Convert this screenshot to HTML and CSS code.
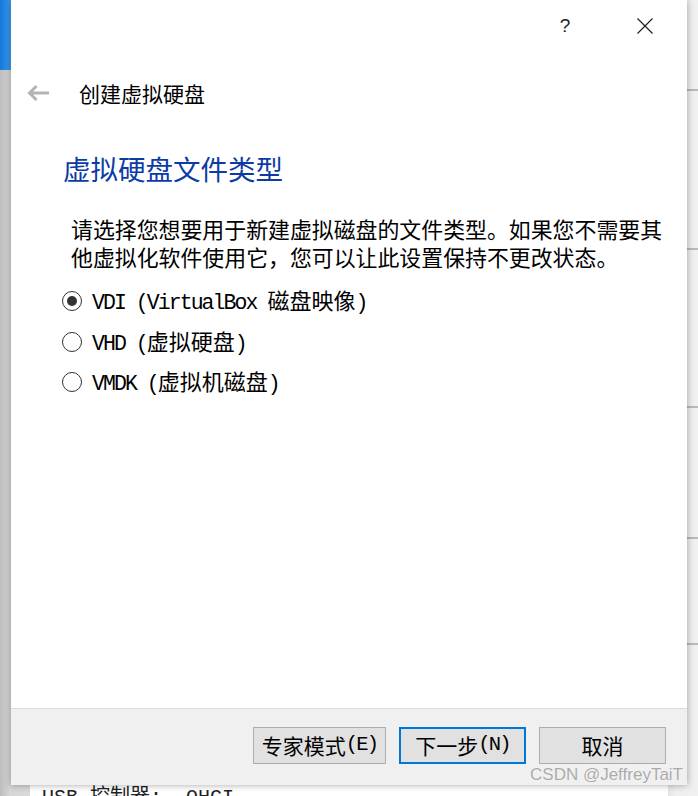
FILE: index.html
```html
<!DOCTYPE html>
<html lang="zh-CN">
<head>
<meta charset="utf-8">
<title>创建虚拟硬盘</title>
<link rel="stylesheet" href="styles.css">
</head>
<body>
<div class="desktop">
  <div class="bg">
    <div class="bg-left"><div class="bg-left-top"></div></div>
    <div class="bg-main"><div class="usb">USB 控制器:&nbsp;&nbsp;OHCI</div></div>
    <div class="bg-right">
      <div class="bg-row r1"></div>
      <div class="bg-row r2"></div>
      <div class="bg-row r3"></div>
      <div class="bg-row r4"></div>
      <div class="bg-row r5"></div>
    </div>
  </div>

  <div class="dialog">
    <div class="titlebar">
      <span class="tb-btn help">?</span>
      <span class="tb-btn close">
        <svg width="16" height="16" viewBox="0 0 16 16"><path d="M0.5 0.5 L15.5 15.5 M15.5 0.5 L0.5 15.5" stroke="#1a1a1a" stroke-width="1.1" fill="none"/></svg>
      </span>
    </div>

    <div class="header">
      <svg class="back" width="24" height="18" viewBox="0 0 24 18"><path d="M23 9 H3.5 M10.5 2 L3.5 9 L10.5 16" stroke="#b3b3b3" stroke-width="3" fill="none"/></svg>
      <span class="title">创建虚拟硬盘</span>
    </div>

    <div class="content">
      <h1 class="heading">虚拟硬盘文件类型</h1>
      <p class="desc">请选择您想要用于新建虚拟磁盘的文件类型。如果您不需要其<br>他虚拟化软件使用它，您可以让此设置保持不更改状态。</p>
      <div class="options">
        <div class="opt"><span class="radio checked"></span><span class="lbl"><span class="lat">VDI (VirtualBox </span>磁盘映像<span class="lat">)</span></span></div>
        <div class="opt"><span class="radio"></span><span class="lbl"><span class="lat">VHD (</span>虚拟硬盘<span class="lat">)</span></span></div>
        <div class="opt"><span class="radio"></span><span class="lbl"><span class="lat">VMDK (</span>虚拟机磁盘<span class="lat">)</span></span></div>
      </div>
    </div>

    <div class="footer">
      <button class="btn wide">专家模式<span class="lat">(E)</span></button>
      <button class="btn default">下一步<span class="lat">(N)</span></button>
      <button class="btn">取消</button>
    </div>

    <div class="watermark">CSDN @JeffreyTaiT</div>
  </div>
</div>
</body>
</html>
```

FILE: styles.css
```css
* { box-sizing: border-box; }
html, body { margin: 0; padding: 0; }
body {
  width: 698px;
  height: 796px;
  overflow: hidden;
  font-family: "Noto Sans CJK SC", "Noto Sans", sans-serif;
  background: #ffffff;
}

.desktop {
  position: relative;
  width: 698px;
  height: 796px;
}

/* background application */
.bg {
  display: grid;
  grid-template-columns: 30px 1fr 30px;
  height: 796px;
}
.bg-left {
  background: linear-gradient(to right, #bdbdbd, #d6d6d6 10px, #d9d9d9);
}
.bg-left-top {
  height: 70px;
  background: linear-gradient(to right, #1378d8, #3a9cf2 11px, #3a9cf2);
}
.bg-main {
  background: #ffffff;
  display: flex;
  flex-direction: column;
  justify-content: flex-end;
}
.usb {
  padding-left: 12px;
  margin-bottom: -17px;
  font-family: "Liberation Mono", "Noto Sans CJK SC", monospace;
  font-size: 20px;
  line-height: 30px;
  color: #222;
  white-space: nowrap;
}
.bg-right {
  background: linear-gradient(to right, #e4e4e4, #efefef 8px, #f0f0f0);
}
.bg-row { border-bottom: 2px solid #b9b9b9; }
.r1 { height: 91px; }
.r2 { height: 159px; }
.r3 { height: 158px; }
.r4 { height: 131px; }
.r5 { height: 106px; }

/* dialog window */
.dialog {
  position: absolute;
  left: 11px;
  top: 0;
  width: 676px;
  height: 785px;
  background: #ffffff;
  display: flex;
  flex-direction: column;
  box-shadow: 0 0 7px rgba(0, 0, 0, 0.35);
}

.titlebar {
  height: 52px;
  display: flex;
  justify-content: flex-end;
  align-items: center;
  gap: 34px;
  padding-right: 19px;
  flex: none;
}
.tb-btn {
  width: 46px;
  height: 40px;
  display: flex;
  align-items: center;
  justify-content: center;
  color: #222;
}
.help {
  font-family: "Liberation Sans", sans-serif;
  font-size: 19px;
}

.header {
  margin-top: 20px;
  height: 42px;
  display: flex;
  align-items: center;
  padding-left: 15px;
  gap: 29px;
  flex: none;
}
.back { display: block; }
.title {
  font-size: 21px;
  color: #000;
  line-height: 42px;
}

.content {
  flex: 1;
  padding-left: 51px;
}
.heading {
  margin: 36px 0 0 1px;
  font-size: 27.5px;
  font-weight: 400;
  line-height: 36px;
  color: #0c3ba6;
}
.desc {
  margin: 29px 0 0 9px;
  font-size: 21.9px;
  line-height: 28px;
  color: #000;
  white-space: nowrap;
}
.options {
  margin-top: 10px;
}
.opt {
  height: 40.5px;
  display: flex;
  align-items: center;
  gap: 10px;
}
.radio {
  width: 20px;
  height: 20px;
  border: 1.5px solid #333;
  border-radius: 50%;
  display: flex;
  align-items: center;
  justify-content: center;
  flex: none;
}
.radio.checked::after {
  content: "";
  width: 10px;
  height: 10px;
  border-radius: 50%;
  background: #333;
}
.lbl {
  font-size: 22px;
  line-height: 30px;
  color: #000;
  white-space: pre;
}
.lat {
  font-family: "Liberation Mono", monospace;
  font-size: 21.5px;
  letter-spacing: -1.94px;
}

.footer {
  height: 77px;
  flex: none;
  background: #f0f0f0;
  border-top: 1px solid #dcdcdc;
  display: flex;
  justify-content: flex-end;
  align-items: flex-start;
  gap: 13px;
  padding: 18px 21px 0 0;
}
.btn {
  width: 127px;
  height: 37px;
  border: 1px solid #adadad;
  background: #e1e1e1;
  font-family: "Noto Sans CJK SC", sans-serif;
  font-size: 21px;
  color: #000;
  padding: 0;
  display: flex;
  align-items: center;
  justify-content: center;
  line-height: 1;
}
.btn.wide { width: 133px; }
.btn.default { border: 2px solid #0078d7; }
.btn .lat {
  font-size: 20.5px;
  letter-spacing: -1.8px;
}

.watermark {
  position: absolute;
  right: 4px;
  top: 764px;
  font-family: "Liberation Sans", sans-serif;
  font-size: 17px;
  line-height: 22px;
  color: #aaaaaa;
  text-shadow: 0 0 1px #fff;
  white-space: nowrap;
}
```
